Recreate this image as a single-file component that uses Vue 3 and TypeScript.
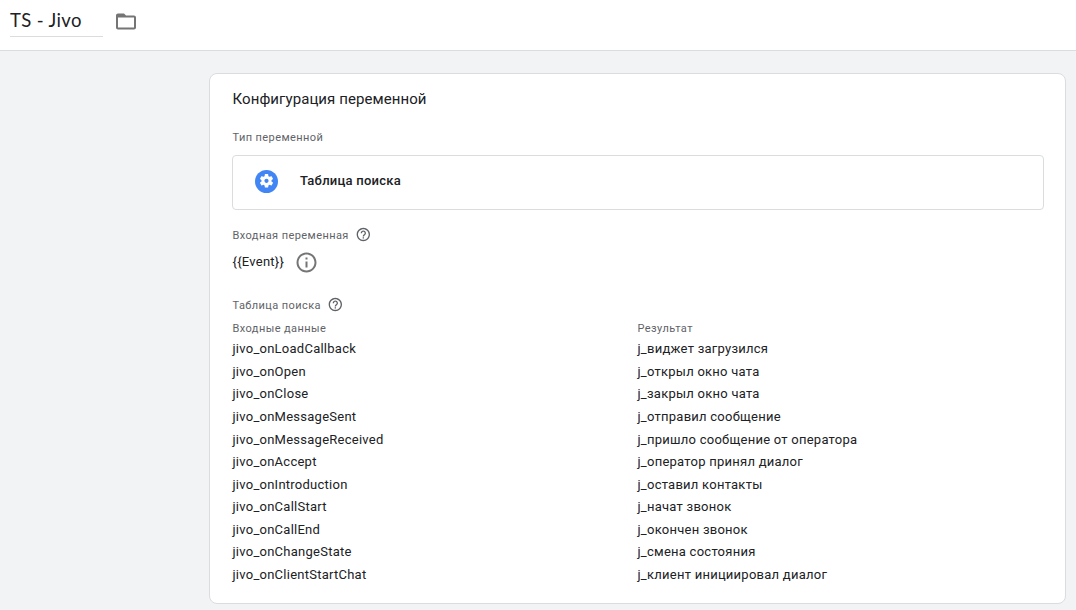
<script setup lang="ts">
interface Row {
  input: string
  output: string
}

const rows: Row[] = [
  { input: 'jivo_onLoadCallback', output: 'j_виджет загрузился' },
  { input: 'jivo_onOpen', output: 'j_открыл окно чата' },
  { input: 'jivo_onClose', output: 'j_закрыл окно чата' },
  { input: 'jivo_onMessageSent', output: 'j_отправил сообщение' },
  { input: 'jivo_onMessageReceived', output: 'j_пришло сообщение от оператора' },
  { input: 'jivo_onAccept', output: 'j_оператор принял диалог' },
  { input: 'jivo_onIntroduction', output: 'j_оставил контакты' },
  { input: 'jivo_onCallStart', output: 'j_начат звонок' },
  { input: 'jivo_onCallEnd', output: 'j_окончен звонок' },
  { input: 'jivo_onChangeState', output: 'j_смена состояния' },
  { input: 'jivo_onClientStartChat', output: 'j_клиент инициировал диалог' },
]

const eventName = '{{Event}}'
const helpPath =
  'M11 18h2v-2h-2v2zm1-16C6.48 2 2 6.48 2 12s4.48 10 10 10 10-4.48 10-10S17.52 2 12 2zm0 18c-4.41 0-8-3.59-8-8s3.59-8 8-8 8 3.59 8 8-3.59 8-8 8zm0-14c-2.21 0-4 1.79-4 4h2c0-1.1.9-2 2-2s2 .9 2 2c0 2-3 1.75-3 5h2c0-2.25 3-2.5 3-5 0-2.21-1.79-4-4-4z'
</script>

<template>
  <div class="page">
    <header class="header">
      <div class="name">TS - Jivo</div>
      <svg class="folder" viewBox="0 0.5 24 24">
        <path d="M20 6h-8l-2-2H4c-1.1 0-1.99.9-1.99 2L2 18c0 1.1.9 2 2 2h16c1.1 0 2-.9 2-2V8c0-1.1-.9-2-2-2zm0 12H4V8h16v10z" />
      </svg>
    </header>
    <main class="card">
      <h2 class="title">Конфигурация переменной</h2>
      <div class="label type-label">Тип переменной</div>
      <div class="type-box">
        <svg class="type-icon" viewBox="0 0 24 24">
          <circle cx="12" cy="12" r="12" fill="#4285f4" />
          <path
            transform="translate(3.6 2.9) scale(.7)"
            fill="#fff"
            d="M19.43 12.98c.04-.32.07-.64.07-.98s-.03-.66-.07-.98l2.11-1.65c.19-.15.24-.42.12-.64l-2-3.46c-.12-.22-.39-.3-.61-.22l-2.49 1c-.52-.4-1.08-.73-1.69-.98l-.38-2.65C14.46 2.18 14.25 2 14 2h-4c-.25 0-.46.18-.49.42l-.38 2.65c-.61.25-1.17.59-1.69.98l-2.49-1c-.23-.09-.49 0-.61.22l-2 3.46c-.13.22-.07.49.12.64l2.11 1.65c-.04.32-.07.65-.07.98s.03.66.07.98l-2.11 1.65c-.19.15-.24.42-.12.64l2 3.46c.12.22.39.3.61.22l2.49-1c.52.4 1.08.73 1.69.98l.38 2.65c.03.24.24.42.49.42h4c.25 0 .46-.18.49-.42l.38-2.65c.61-.25 1.17-.59 1.69-.98l2.49 1c.23.09.49 0 .61-.22l2-3.46c.12-.22.07-.49-.12-.64l-2.11-1.65zM12 15.1c-1.71 0-3.1-1.39-3.1-3.1s1.39-3.1 3.1-3.1 3.1 1.39 3.1 3.1-1.39 3.1-3.1 3.1z"
          />
        </svg>
        <span class="type-name">Таблица поиска</span>
      </div>
      <div class="label-row input-label">
        <span class="label">Входная переменная</span>
        <svg class="help" viewBox="1 0.8 24 24"><path :d="helpPath" /></svg>
      </div>
      <div class="event">
        <span class="event-name">{{ eventName }}</span>
        <svg class="info" viewBox="0.5 0.5 24 24">
          <path d="M11 7h2v2h-2zm0 4h2v6h-2zm1-9C6.48 2 2 6.48 2 12s4.48 10 10 10 10-4.48 10-10S17.52 2 12 2zm0 18c-4.41 0-8-3.59-8-8s3.59-8 8-8 8 3.59 8 8-3.59 8-8 8z" />
        </svg>
      </div>
      <div class="label-row table-label">
        <span class="label">Таблица поиска</span>
        <svg class="help" viewBox="1 0.8 24 24"><path :d="helpPath" /></svg>
      </div>
      <div class="table">
        <div class="table-row table-head label">
          <span>Входные данные</span>
          <span>Результат</span>
        </div>
        <div v-for="row in rows" :key="row.input" class="table-row">
          <span class="key">{{ row.input }}</span>
          <span class="value">{{ row.output }}</span>
        </div>
      </div>
    </main>
  </div>
</template>

<style>
body {
  margin: 0;
  background: #f1f3f4;
}
</style>

<style scoped>
.page {
  box-sizing: border-box;
  height: 610px;
  overflow: hidden;
  background: #f1f3f4;
  color: #202124;
  font-family: Roboto, "Noto Sans", sans-serif;
  font-size: 13px;
}
.header {
  box-sizing: border-box;
  display: flex;
  align-items: flex-start;
  height: 51px;
  padding-left: 10px;
  background: #fff;
  border-bottom: 1px solid #dadce0;
}
.name {
  box-sizing: border-box;
  width: 93px;
  height: 37px;
  padding-top: 8px;
  border-bottom: 1px solid #dadce0;
  font-family: Lato, Roboto, sans-serif;
  font-size: 18.5px;
  line-height: 24px;
  letter-spacing: 0.35px;
  white-space: nowrap;
}
.folder {
  width: 24px;
  height: 24px;
  margin: 10px 0 0 11px;
  fill: #757575;
}
.card {
  box-sizing: border-box;
  width: 857px;
  height: 531px;
  margin: 22px 0 0 209px;
  padding: 15px 21px 0 22px;
  background: #fff;
  border: 1px solid #dadce0;
  border-radius: 8px;
}
.title {
  margin: 0;
  padding-left: 0.5px;
  font-size: 15px;
  font-weight: 400;
  line-height: 20px;
  letter-spacing: 0.08px;
}
.label {
  color: #5f6368;
  font-size: 11px;
  line-height: 16px;
  letter-spacing: 0.42px;
}
.type-label {
  margin-top: 21px;
  padding-left: 0.5px;
}
.type-box {
  box-sizing: border-box;
  display: flex;
  height: 55px;
  margin-top: 9px;
  padding: 14px 0 0 22px;
  border: 1px solid #dadce0;
  border-radius: 4px;
}
.type-icon {
  width: 23px;
  height: 23px;
}
.type-name {
  margin-left: 22px;
  font-weight: 500;
  line-height: 21px;
  letter-spacing: 0.25px;
}
.label-row {
  display: flex;
  align-items: flex-start;
  height: 16px;
  padding-left: 0.5px;
}
.help {
  width: 16px;
  height: 16px;
  margin: -1px 0 0 6.8px;
  fill: #5f6368;
}
.input-label {
  margin-top: 18px;
}
.event {
  display: flex;
  align-items: flex-start;
  height: 24px;
  margin-top: 6px;
  padding-left: 0.5px;
}
.event-name {
  line-height: 23px;
  letter-spacing: 0.25px;
}
.info {
  width: 24px;
  height: 24px;
  margin: 1px 0 0 10.5px;
  fill: #757575;
}
.table-label {
  margin-top: 24px;
}
.table {
  margin-top: 7px;
  padding-left: 0.5px;
}
.table-row {
  display: grid;
  grid-template-columns: 405px 1fr;
  height: 22.56px;
  line-height: 22.56px;
}
.table-row.table-head {
  height: 17.35px;
  line-height: 16px;
}
.key,
.value {
  letter-spacing: 0.25px;
}
</style>
